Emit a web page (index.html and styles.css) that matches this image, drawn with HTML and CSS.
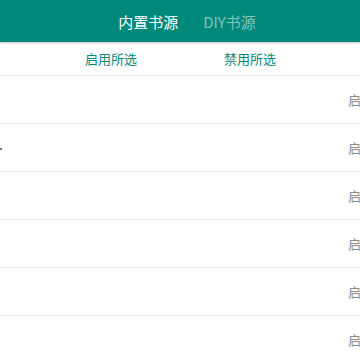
FILE: index.html
```html
<!DOCTYPE html>
<html>
<head>
<meta charset="utf-8">
<link rel="stylesheet" href="styles.css">
</head>
<body>
<div class="header">
  <div class="tabs">
    <span class="tab active">内置书源</span>
    <span class="tab">DIY书源</span>
  </div>
</div>
<div class="filters">
  <span class="fbtn first">启用所选</span>
  <span class="fbtn second">禁用所选</span>
</div>
<div class="list">
  <div class="row"><span class="state">启</span></div>
  <div class="row"><span class="mark"></span><span class="state">启</span></div>
  <div class="row"><span class="state">启</span></div>
  <div class="row"><span class="state">启</span></div>
  <div class="row"><span class="state">启</span></div>
  <div class="row"><span class="state">启</span></div>
</div>
</body>
</html>
```
FILE: styles.css
```css
html, body {
  margin: 0;
  padding: 0;
  width: 360px;
  height: 360px;
  overflow: hidden;
  background: #ffffff;
  font-family: "Noto Sans CJK SC", "Noto Sans", sans-serif;
}
.header {
  height: 42px;
  background: #00897b;
  box-shadow: 0 1px 2px rgba(0,0,0,0.25);
  position: relative;
  z-index: 1;
  display: flex;
  align-items: center;
  justify-content: center;
}
.tabs {
  display: flex;
  gap: 25px;
  margin-left: 14px;
}
.tab {
  font-size: 15px;
  color: rgba(255,255,255,0.5);
  font-weight: 400;
}
.tab.active {
  color: #ffffff;
}
.filters {
  height: 33px;
  border-bottom: 1px solid #e6e6e6;
  display: flex;
  align-items: center;
}
.fbtn {
  font-size: 13px;
  color: #00897b;
}
.fbtn.first { margin-left: 85px; }
.fbtn.second { margin-left: 87px; }
.list {
  display: flex;
  flex-direction: column;
}
.row {
  height: 47px;
  border-bottom: 1px solid #e6e6e6;
  display: flex;
  align-items: center;
  justify-content: flex-end;
  position: relative;
}
.state {
  font-size: 13px;
  color: #8a8a8a;
  margin-right: -1px;
}
.mark {
  position: absolute;
  left: 0;
  top: 24px;
  width: 2px;
  height: 2px;
  background: #777;
}
```
